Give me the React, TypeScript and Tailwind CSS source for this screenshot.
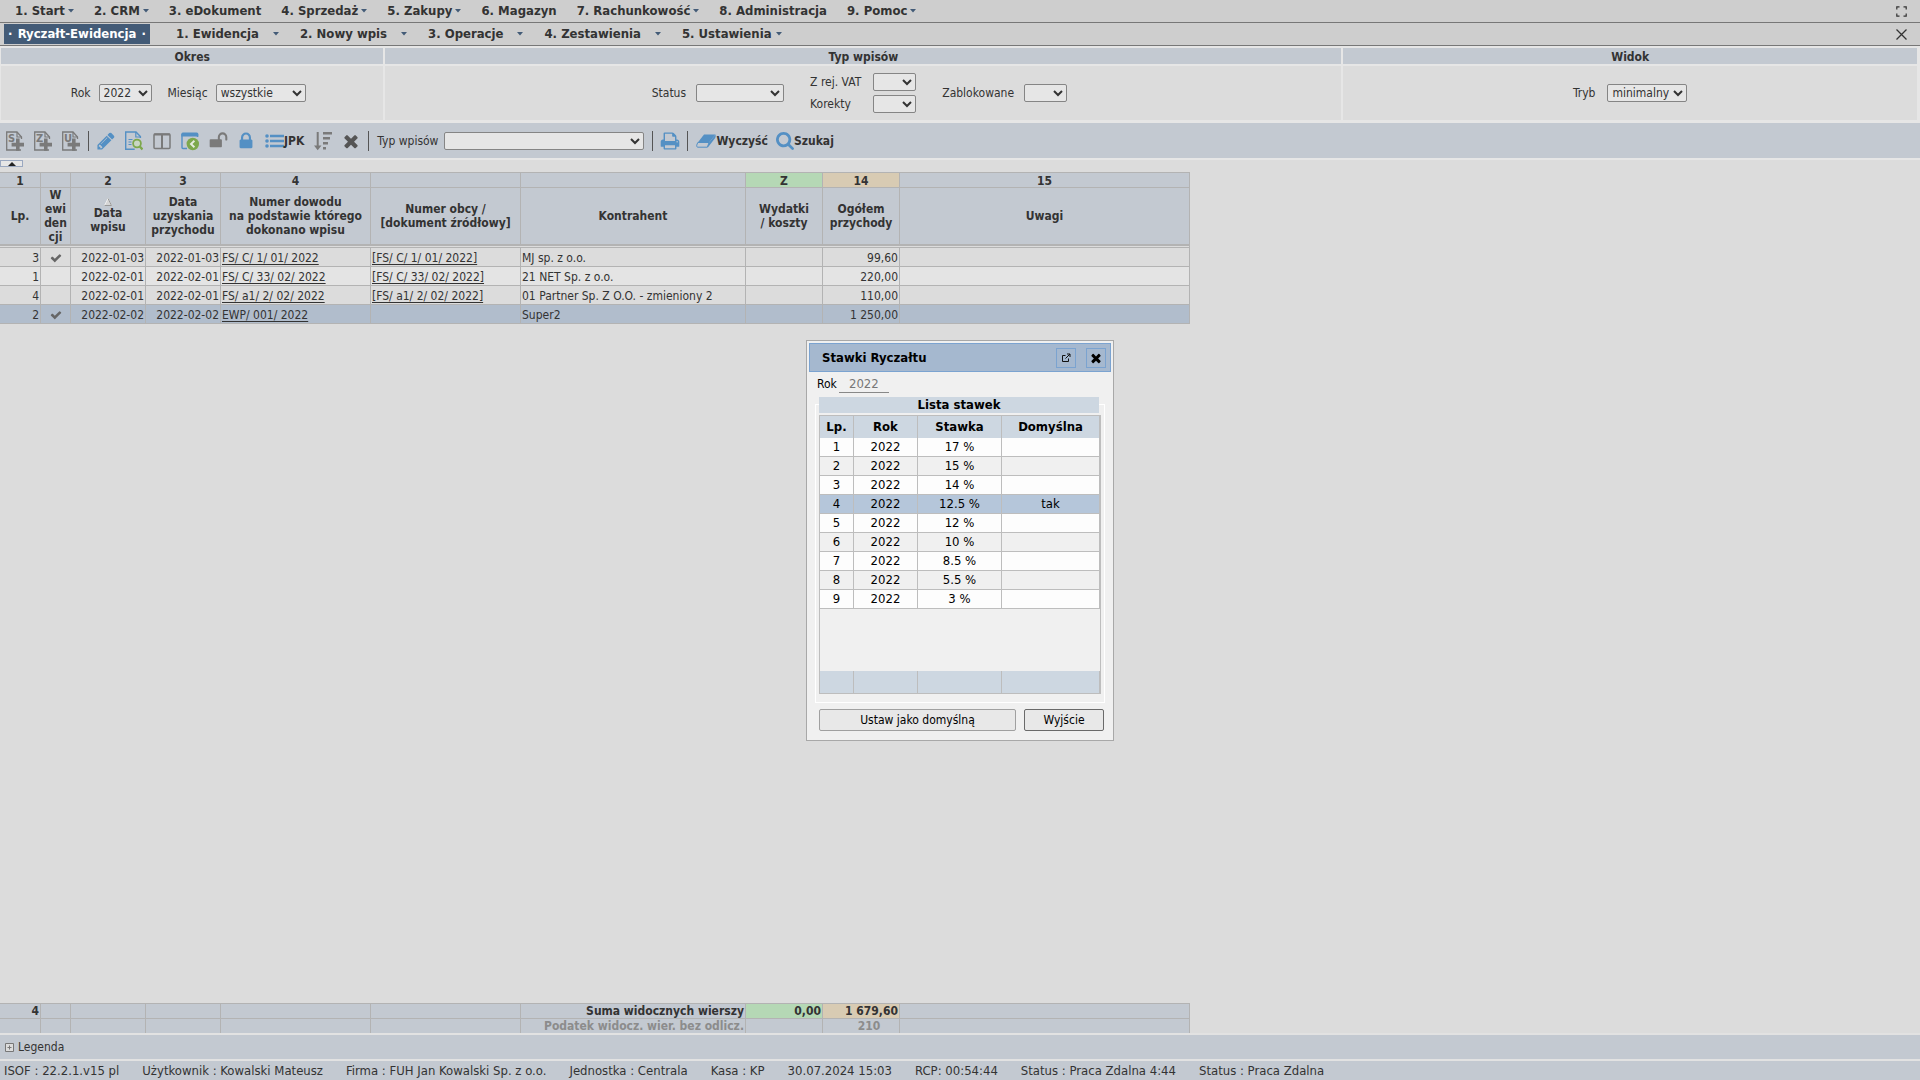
import type { ReactNode } from "react";
import clsx from "clsx";

type MenuEntry = { label: string; arrow?: boolean };

const mainMenu: MenuEntry[] = [
  { label: "1. Start", arrow: true },
  { label: "2. CRM", arrow: true },
  { label: "3. eDokument" },
  { label: "4. Sprzedaż", arrow: true },
  { label: "5. Zakupy", arrow: true },
  { label: "6. Magazyn" },
  { label: "7. Rachunkowość", arrow: true },
  { label: "8. Administracja" },
  { label: "9. Pomoc", arrow: true },
];

const moduleMenu = ["1. Ewidencja", "2. Nowy wpis", "3. Operacje", "4. Zestawienia", "5. Ustawienia"];

const entries = [
  { lp: 3, checked: true, date: "2022-01-03", income: "2022-01-03", doc: "FS/ C/ 1/ 01/ 2022", source: "[FS/ C/ 1/ 01/ 2022]", client: "MJ sp. z o.o.", total: "99,60" },
  { lp: 1, checked: false, date: "2022-02-01", income: "2022-02-01", doc: "FS/ C/ 33/ 02/ 2022", source: "[FS/ C/ 33/ 02/ 2022]", client: "21 NET Sp. z o.o.", total: "220,00" },
  { lp: 4, checked: false, date: "2022-02-01", income: "2022-02-01", doc: "FS/ a1/ 2/ 02/ 2022", source: "[FS/ a1/ 2/ 02/ 2022]", client: "01 Partner Sp. Z O.O. - zmieniony 2", total: "110,00" },
  { lp: 2, checked: true, date: "2022-02-02", income: "2022-02-02", doc: "EWP/ 001/ 2022", source: "", client: "Super2", total: "1 250,00", selected: true },
];

const rates = ["17 %", "15 %", "14 %", "12.5 %", "12 %", "10 %", "8.5 %", "5.5 %", "3 %"];

const PENCIL =
  "M491 1536l91-91-235-235-91 91v107h128v128h107zm523-928q0-22-22-22-10 0-17 7l-542 542q-7 7-7 17 0 22 22 22 10 0 17-7l542-542q7-7 7-17zm-54-192l416 416-832 832h-416v-416zm683 96q0 53-37 90l-166 166-416-416 166-165q36-38 90-38 53 0 91 38l235 234q37 39 37 91z";
const UNLOCK =
  "M1728 576v256q0 26-19 45t-45 19h-64q-26 0-45-19t-19-45v-256q0-106-75-181t-181-75-181 75-75 181v192h96q40 0 68 28t28 68v576q0 40-28 68t-68 28h-960q-40 0-68-28t-28-68v-576q0-40 28-68t68-28h672v-192q0-185 131.5-316.5t316.5-131.5 316.5 131.5 131.5 316.5z";
const LOCK =
  "M640 768h512v-192q0-106-75-181t-181-75-181 75-75 181v192zm832 96v576q0 40-28 68t-68 28h-960q-40 0-68-28t-28-68v-576q0-40 28-68t68-28h32v-192q0-184 132-316t316-132 316 132 132 316v192h32q40 0 68 28t28 68z";
const TIMES =
  "M1490 1322q0 40-28 68l-136 136q-28 28-68 28t-68-28l-294-294-294 294q-28 28-68 28t-68-28l-136-136q-28-28-28-68t28-68l294-294-294-294q-28-28-28-68t28-68l136-136q28-28 68-28t68 28l294 294 294-294q28-28 68-28t68 28l136 136q28 28 28 68t-28 68l-294 294 294 294q28 28 28 68z";
const PRINT =
  "M448 1536h896v-256h-896v256zm0-640h896v-384h-160q-40 0-68-28t-28-68v-160h-640v640zm1152 64q0-26-19-45t-45-19-45 19-19 45 19 45 45 19 45-19 19-45zm128 0v416q0 13-9.5 22.5t-22.5 9.5h-224v160q0 40-28 68t-68 28h-960q-40 0-68-28t-28-68v-160h-224q-13 0-22.5-9.5t-9.5-22.5v-416q0-79 56.5-135.5t135.5-56.5h64v-544q0-40 28-68t68-28h672q40 0 88 20t76 48l152 152q28 28 48 76t20 88v256h64q79 0 135.5 56.5t56.5 135.5z";
const SEARCH =
  "M1216 832q0-185-131.5-316.5t-316.5-131.5-316.5 131.5-131.5 316.5 131.5 316.5 316.5 131.5 316.5-131.5 131.5-316.5zm512 832q0 52-38 90t-90 38q-54 0-90-38l-343-342q-179 124-399 124-143 0-273.5-55.5t-225-150-150-225-55.5-273.5 55.5-273.5 150-225 225-150 273.5-55.5 273.5 55.5 225 150 150 225 55.5 273.5q0 220-124 399l343 343q37 37 37 90z";
const CHECK =
  "M1671 566q0 40-28 68l-724 724-136 136q-28 28-68 28t-68-28l-136-136-362-362q-28-28-28-68t28-68l136-136q28-28 68-28t68 28l294 295 656-657q28-28 68-28t68 28l136 136q28 28 28 68z";

function Glyph({ d, viewBox = "0 0 1792 1792", className }: { d: string; viewBox?: string; className?: string }) {
  return (
    <svg viewBox={viewBox} className={clsx("shrink-0 fill-current", className)} aria-hidden="true">
      <path d={d} />
    </svg>
  );
}

function AddDocIcon({ letter }: { letter: string }) {
  return (
    <svg viewBox="0 0 18 20" className="w-[18px] h-5" aria-hidden="true">
      <path d="M15.500 8V6L11 1H.7v18H15" fill="none" stroke="#7a7a7a" strokeWidth="1.300" />
      <path d="M11 1v5h4.500" fill="none" stroke="#7a7a7a" strokeWidth="1.200" />
      <path d="M10 7.500h3.600v4.300H18v3.600h-4.400v4.300H10v-4.300H5.600v-3.600H10z" fill="#7a7a7a" />
      <text x="2" y="10.500" fontSize="11" fontWeight="700" fill="#7a7a7a">
        {letter}
      </text>
    </svg>
  );
}

function PreviewIcon() {
  return (
    <svg viewBox="0 0 18 20" className="w-[18px] h-5" aria-hidden="true">
      <path d="M15.400 7V5.600L11 1H.7v17.300h9" fill="none" stroke="#5490c4" strokeWidth="1.400" />
      <path d="M10.800 1v5h4.600" fill="none" stroke="#5490c4" strokeWidth="1.200" />
      <path d="M3.500 8.500h4M3.500 11h3M3.500 13.500h3" stroke="#5490c4" strokeWidth="1.200" />
      <circle cx="12" cy="12.500" r="3.900" fill="#c9d6c4" stroke="#7da84c" strokeWidth="1.800" />
      <path d="M14.800 15.500l2.700 3" stroke="#7da84c" strokeWidth="2.400" />
    </svg>
  );
}

function ColumnsIcon() {
  return (
    <svg viewBox="0 0 18 18" className="size-[18px]" aria-hidden="true">
      <rect x="1" y="2" width="16" height="14.500" rx="1" fill="none" stroke="#7a7a7a" strokeWidth="1.500" />
      <path d="M1 2.500h16M9 2v14" stroke="#7a7a7a" strokeWidth="2" />
    </svg>
  );
}

function RestoreIcon() {
  return (
    <svg viewBox="0 0 18 20" className="w-[18px] h-5" aria-hidden="true">
      <path d="M1 3v13.500q0 1 1 1h4M16.500 6V3" fill="none" stroke="#5490c4" strokeWidth="1.400" />
      <path d="M.3 5.500V3q0-1.500 1.500-1.500h14q1.500 0 1.500 1.500v2.500z" fill="#5490c4" />
      <circle cx="11.800" cy="13" r="6.200" fill="#7da84c" />
      <path d="M13.400 9.800L10 13l3.400 3.200" fill="none" stroke="#e6ecdf" strokeWidth="1.900" />
    </svg>
  );
}

function ListIcon() {
  return (
    <svg viewBox="0 0 19 14" className="w-[19px] h-3.5 fill-[#5490c4]" aria-hidden="true">
      <circle cx="2" cy="2" r="1.800" />
      <circle cx="2" cy="7" r="1.800" />
      <circle cx="2" cy="12" r="1.800" />
      <path d="M5 .8h14v2.400H5zM5 5.800h14v2.400H5zM5 10.800h14v2.400H5z" />
    </svg>
  );
}

function SortIcon() {
  return (
    <svg viewBox="0 0 18 20" className="w-[18px] h-5 fill-[#7a7a7a]" aria-hidden="true">
      <path d="M2.700 1h2v13.500h2.800L3.700 19.300 0 14.500h2.700z" />
      <path d="M9 1h9v2.500H9zM9 6h7v2.500H9zM9 11h5v2.500H9zM9 16h3v2.500H9z" />
    </svg>
  );
}

function EraserIcon() {
  return (
    <svg viewBox="0 0 20 14" className="w-5 h-3.5" aria-hidden="true">
      <path d="M8 .5h11.500l-6.400 8H1.800z" fill="#5490c4" />
      <path d="M1.800 8.500L.7 11.200q-.2 2 1 2h9.600l1.800-4.700z" fill="#c3c9d1" stroke="#5490c4" strokeWidth="1" />
      <path d="M13.100 8.500L19.500.5q.5 2-.3 3.500L12 13.200h-.7z" fill="#5490c4" />
    </svg>
  );
}

function Arrow({ className }: { className?: string }) {
  return (
    <svg viewBox="0 0 6 4" className={clsx("w-1.5 h-1", className)} aria-hidden="true">
      <path d="M0 0h6L3 3.500z" fill="#435b77" />
    </svg>
  );
}

function SelectField({ label, options = [""], width, gap = "gap-2.5" }: { label: string; options?: string[]; width: string; gap?: string }) {
  return (
    <label className={clsx("flex items-center justify-between", gap)}>
      <span className="whitespace-nowrap">{label}</span>
      <select className={clsx("h-[18px] rounded-xs border border-[#858585] bg-[#e6e6e6] leading-4", width)}>
        {options.map((o) => (
          <option key={o}>{o}</option>
        ))}
      </select>
    </label>
  );
}

function FilterGroup({ title, children }: { title: string; children: ReactNode }) {
  return (
    <section className="flex flex-col gap-0.5">
      <h2 className="h-4 bg-[#c3c9d1] text-center font-bold leading-[18px]">{title}</h2>
      <div className="flex h-[54px] items-center justify-center bg-[#dcdcdc]">{children}</div>
    </section>
  );
}

function ToolButton({ label, className, children }: { label: string; className?: string; children: ReactNode }) {
  return (
    <button type="button" aria-label={label} className={clsx("flex h-5 w-[18px] shrink-0 items-center justify-center", className)}>
      {children}
    </button>
  );
}

function Separator() {
  return <span className="h-5 w-px shrink-0 bg-[#555]" />;
}

function EntryCols() {
  return (
    <colgroup>
      <col className="w-[41px]" />
      <col className="w-[30px]" />
      <col className="w-[75px]" />
      <col className="w-[75px]" />
      <col className="w-[150px]" />
      <col className="w-[150px]" />
      <col className="w-[225px]" />
      <col className="w-[77px]" />
      <col className="w-[77px]" />
      <col className="w-[290px]" />
    </colgroup>
  );
}

function EntriesTable() {
  return (
    <table className="w-[1190px] table-fixed border-separate border-spacing-0 [&_td]:border-r [&_td]:border-b [&_td]:border-[#b3b3b3] [&_th]:border-r [&_th]:border-b [&_th]:border-[#b3b3b3]">
      <EntryCols />
      <thead className="bg-[#c3c9d1] text-center leading-[14px]">
        <tr className="h-4 leading-3 [&>th]:border-t [&>th]:p-0 [&>th]:pt-0.5">
          <th>1</th>
          <th></th>
          <th>2</th>
          <th>3</th>
          <th>4</th>
          <th></th>
          <th></th>
          <th className="bg-[#b5d8b5]">Z</th>
          <th className="bg-[#d8cbb3]">14</th>
          <th>15</th>
        </tr>
        <tr className="h-[58px] [&>th]:border-b-2 [&>th]:p-0">
          <th>Lp.</th>
          <th>
            W<br />ewi<br />den<br />cji
          </th>
          <th>
            <svg viewBox="0 0 8 8" className="mx-auto size-2" aria-hidden="true">
              <path d="M4 .5L.5 7.500h7z" fill="#d6d6d6" stroke="#eee" />
              <path d="M4 .5l3.500 7h-7" fill="none" stroke="#999" />
            </svg>
            Data
            <br />
            wpisu
          </th>
          <th>
            Data
            <br />
            uzyskania
            <br />
            przychodu
          </th>
          <th>
            Numer dowodu
            <br />
            na podstawie którego
            <br />
            dokonano wpisu
          </th>
          <th>
            Numer obcy /<br />
            [dokument źródłowy]
          </th>
          <th>Kontrahent</th>
          <th>
            Wydatki
            <br />/ koszty
          </th>
          <th>
            Ogółem
            <br />
            przychody
          </th>
          <th>Uwagi</th>
        </tr>
      </thead>
      <tbody className="leading-4">
        <tr aria-hidden="true" className="h-0.5">
          <td colSpan={10} className="border-r-0 p-0"></td>
        </tr>
        {entries.map((e) => (
          <tr
            key={e.lp}
            className={clsx("h-[19px] whitespace-nowrap [&>td]:px-px [&>td]:pt-0.5 [&>td]:pb-0", e.selected ? "bg-[#b1bdcc]" : "odd:bg-[#e4e4e4]")}
          >
            <td className="text-right">{e.lp}</td>
            <td>{e.checked && <Glyph d={CHECK} className="mx-auto size-3 text-[#666]" />}</td>
            <td className="text-right">{e.date}</td>
            <td className="text-right">{e.income}</td>
            <td>
              <a href="#" className="underline underline-offset-2">{e.doc}</a>
            </td>
            <td>
              <a href="#" className="underline underline-offset-2">{e.source}</a>
            </td>
            <td>{e.client}</td>
            <td></td>
            <td className="text-right">{e.total}</td>
            <td></td>
          </tr>
        ))}
      </tbody>
    </table>
  );
}

function SummaryTable() {
  return (
    <table className="w-[1190px] table-fixed border-separate border-spacing-0 bg-[#c3c9d1] font-bold leading-[14px] [&_td]:border-t [&_td]:border-r [&_td]:border-[#b3b3b3] [&_td]:px-px [&_td]:py-0">
      <EntryCols />
      <tbody>
        <tr className="h-[15px] text-right">
          <td>4</td>
          <td></td>
          <td></td>
          <td></td>
          <td></td>
          <td></td>
          <td>Suma widocznych wierszy</td>
          <td className="bg-[#b5d8b5]">0,00</td>
          <td className="bg-[#d8cbb3]">1 679,60</td>
          <td></td>
        </tr>
        <tr className="h-[15px] text-[#8c8c8c]">
          <td></td>
          <td></td>
          <td></td>
          <td></td>
          <td></td>
          <td></td>
          <td className="text-right">Podatek widocz. wier. bez odlicz.</td>
          <td></td>
          <td className="text-center">
            <span className="pl-4">210</span>
          </td>
          <td></td>
        </tr>
      </tbody>
    </table>
  );
}

function RatesDialog() {
  return (
    <div
      role="dialog"
      aria-labelledby="rates-title"
      className="absolute inset-x-0 top-[340px] mx-auto w-[308px] border border-[#a8a8a8] bg-[#f0f0f0] p-0.5 text-black"
    >
      <header className="flex h-[29px] items-center border border-[#7ba3d0] bg-[#a5b8cf] pr-1 pl-3">
        <h2 id="rates-title" className="flex-1 text-[13px] font-bold">Stawki Ryczałtu</h2>
        <button type="button" aria-label="Otwórz w nowym oknie" className="mr-2.5 flex size-5 items-center justify-center border border-[#7ba3d0]">
          <svg viewBox="0 0 10 10" className="size-2.5" fill="none" stroke="#111" aria-hidden="true">
            <path d="M4.500 2.500h-3v6h6v-3M6 1h3v3M9 1L4.500 5.500" />
          </svg>
        </button>
        <button type="button" aria-label="Zamknij" className="flex size-5 items-center justify-center border border-[#7ba3d0]">
          <Glyph d={TIMES} className="size-3.5" />
        </button>
      </header>

      <div className="px-1.5 pb-[7px]">
        <label className="flex h-6 items-center gap-0.5 pl-0.5">
          Rok
          <input readOnly value="2022" className="h-[17px] w-[50px] border-b border-[#888] text-center text-[13px] text-[#777]" />
        </label>

        <div className="mt-2 border border-white px-[3px] pb-2">
          <h3 className="relative -mt-2 h-4 w-[280px] max-w-full bg-[#cdd7e1] text-center text-[13px] font-bold leading-4">Lista stawek</h3>
          <div className="mt-0.5 flex h-[279px] flex-col justify-between border border-[#bdbdbd]">
            <table className="w-full table-fixed border-separate border-spacing-0 text-center text-[13px] [&_td]:border-r [&_td]:border-[#bdbdbd] [&_th]:border-r [&_th]:border-[#bdbdbd]">
              <colgroup>
                <col className="w-[34px]" />
                <col className="w-16" />
                <col className="w-[84px]" />
                <col />
              </colgroup>
              <thead className="bg-[#cdd7e1]">
                <tr className="h-[22px] [&>th]:p-0">
                  <th>Lp.</th>
                  <th>Rok</th>
                  <th>Stawka</th>
                  <th>Domyślna</th>
                </tr>
              </thead>
              <tbody>
                {rates.map((rate, i) => (
                  <tr
                    key={rate}
                    className={clsx(
                      "h-[19px] leading-[18px] [&>td]:border-b [&>td]:p-0",
                      rate === "12.5 %" ? "bg-[#b5c6da]" : "odd:bg-[#fdfdfd]",
                    )}
                  >
                    <td>{i + 1}</td>
                    <td>2022</td>
                    <td>{rate}</td>
                    <td>{rate === "12.5 %" ? "tak" : ""}</td>
                  </tr>
                ))}
              </tbody>
            </table>
            <div className="grid h-[22px] grid-cols-[34px_64px_84px_1fr] bg-[#cdd7e1] *:border-r *:border-[#bdbdbd]">
              <span />
              <span />
              <span />
              <span />
            </div>
          </div>
        </div>

        <div className="mt-1.5 flex gap-2 pr-px pl-1">
          <button type="button" className="h-[22px] flex-1 rounded-xs border border-[#a0a0a0] bg-[#e8e8e8]">Ustaw jako domyślną</button>
          <button type="button" className="h-[22px] w-20 rounded-xs border border-[#6a6a6a] bg-[#e8e8e8]">Wyjście</button>
        </div>
      </div>
    </div>
  );
}

export default function App() {
  return (
    <div className="relative flex min-h-screen flex-col bg-[#dcdcdc] font-['DejaVu_Sans_Condensed','DejaVu_Sans',sans-serif] text-[12px] leading-4 text-[#333]">
      <nav className="flex h-[23px] items-center border-b border-[#777] bg-[#cecece] pr-[13px] pl-[15px] text-[13px] font-bold">
        <ul className="flex flex-1 gap-5">
          {mainMenu.map((m) => (
            <li key={m.label}>
              <a href="#" className="flex items-center gap-[3px] whitespace-nowrap">
                {m.label}
                {m.arrow && <Arrow />}
              </a>
            </li>
          ))}
        </ul>
        <button type="button" aria-label="Pełny ekran">
          <svg viewBox="0 0 11 11" className="size-[11px]" fill="none" stroke="#333" strokeWidth="1.200" aria-hidden="true">
            <path d="M.8 3.500V.8h2.700M7.500.8h2.700v2.700M10.200 7.500v2.700H7.500M3.500 10.200H.8V7.500" />
          </svg>
        </button>
      </nav>

      <nav className="flex h-[23px] items-center border-b border-[#777] bg-[#cecece] pr-[13px] pl-1 text-[13px] font-bold">
        <a href="#" className="mr-[26px] flex h-5 w-[146px] items-center justify-between bg-[#435b77] px-1 text-white">
          <span>·</span>
          Ryczałt-Ewidencja
          <span>·</span>
        </a>
        <ul className="flex flex-1 gap-[21px]">
          {moduleMenu.map((label, i) => (
            <li key={label}>
              <a href="#" className={clsx("flex items-center whitespace-nowrap", i < 4 ? "gap-3.5" : "gap-1")}>
                {label}
                <Arrow />
              </a>
            </li>
          ))}
        </ul>
        <button type="button" aria-label="Zamknij moduł">
          <svg viewBox="0 0 11 11" className="size-[11px]" stroke="#333" strokeWidth="1.300" aria-hidden="true">
            <path d="M.5.5l10 10M10.500.5l-10 10" />
          </svg>
        </button>
      </nav>

      <div className="grid grid-cols-[2fr_5fr_3fr] gap-x-0.5 bg-[#e6e6e6] pt-0.5 pr-[3px] pb-[3px] pl-px">
        <FilterGroup title="Okres">
          <div className="flex gap-4 pr-2">
            <SelectField label="Rok" options={["2022", "2021"]} width="w-[53px]" gap="gap-2" />
            <SelectField label="Miesiąc" options={["wszystkie", "styczeń", "luty"]} width="w-[90px]" gap="gap-2" />
          </div>
        </FilterGroup>
        <FilterGroup title="Typ wpisów">
          <div className="flex items-center gap-[26px] pr-2">
            <SelectField label="Status" width="w-[88px]" />
            <div className="flex flex-col gap-1">
              <SelectField label="Z rej. VAT" width="w-[43px]" gap="gap-3" />
              <SelectField label="Korekty" width="w-[43px]" gap="gap-3" />
            </div>
            <SelectField label="Zablokowane" width="w-[43px]" />
          </div>
        </FilterGroup>
        <FilterGroup title="Widok">
          <SelectField label="Tryb" options={["minimalny", "pełny"]} width="w-20" gap="gap-3" />
        </FilterGroup>
      </div>

      <div className="flex h-[37px] items-center gap-2 border-b-2 border-[#e6e6e6] bg-[#c3c9d1] pl-1.5 text-[#7a7a7a]">
        <div className="flex gap-2.5">
          <ToolButton label="Dodaj sprzedaż"><AddDocIcon letter="S" /></ToolButton>
          <ToolButton label="Dodaj zakup"><AddDocIcon letter="Z" /></ToolButton>
          <ToolButton label="Dodaj usługę"><AddDocIcon letter="U" /></ToolButton>
        </div>
        <Separator />
        <div className="flex items-center gap-2.5">
          <ToolButton label="Edytuj"><Glyph d={PENCIL} className="size-5 text-[#5490c4]" /></ToolButton>
          <ToolButton label="Podgląd"><PreviewIcon /></ToolButton>
          <ToolButton label="Kolumny"><ColumnsIcon /></ToolButton>
          <ToolButton label="Przywróć"><RestoreIcon /></ToolButton>
          <ToolButton label="Odblokuj"><Glyph d={UNLOCK} className="size-[19px]" /></ToolButton>
          <ToolButton label="Zablokuj"><Glyph d={LOCK} className="size-5 text-[#5490c4]" /></ToolButton>
          <button type="button" className="flex items-center font-bold text-[#333]">
            <ListIcon />
            JPK
          </button>
          <ToolButton label="Sortuj"><SortIcon /></ToolButton>
          <ToolButton label="Usuń"><Glyph d={TIMES} className="size-5 text-[#555]" /></ToolButton>
        </div>
        <div className="flex items-center gap-2 text-[#333]">
          <Separator />
          <SelectField label="Typ wpisów" width="w-[200px]" gap="gap-1.5" />
          <Separator />
          <ToolButton label="Drukuj"><Glyph d={PRINT} className="size-5 text-[#5490c4]" /></ToolButton>
          <Separator />
          <button type="button" className="flex items-center font-bold">
            <EraserIcon />
            Wyczyść
          </button>
          <button type="button" className="flex items-center font-bold">
            <Glyph d={SEARCH} viewBox="64 128 1664 1664" className="size-[18px] text-[#5490c4]" />
            Szukaj
          </button>
        </div>
      </div>

      <main className="flex-1">
        <button type="button" aria-label="Zwiń filtry" className="mb-[5px] flex h-[7px] w-[23px] items-center justify-center border border-[#9aa8c0] bg-[#e6e6e6]">
          <svg viewBox="0 0 8 4" className="h-1 w-2" aria-hidden="true">
            <path d="M0 4l4-4 4 4z" fill="#222" />
          </svg>
        </button>
        <EntriesTable />
      </main>

      <SummaryTable />
      <div className="flex h-7 items-center gap-1 border-y-2 border-[#e2e2e2] bg-[#c3c9d1] pl-[5px]">
        <button type="button" className="flex items-center gap-1">
          <svg viewBox="0 0 9 9" className="size-[9px]" fill="#dcdcdc" stroke="#777" aria-hidden="true">
            <path d="M.5.5h8v8h-8zM2.500 4.500h4M4.500 2.500v4" />
          </svg>
          Legenda
        </button>
      </div>
      <footer className="flex h-[19px] items-center gap-[23px] whitespace-nowrap bg-[#c3c9d1] pl-1 text-[13px]">
        <span>ISOF : 22.2.1.v15 pl</span>
        <span>Użytkownik : Kowalski Mateusz</span>
        <span>Firma : FUH Jan Kowalski Sp. z o.o.</span>
        <span>Jednostka : Centrala</span>
        <span>Kasa : KP</span>
        <span>30.07.2024 15:03</span>
        <span>RCP: 00:54:44</span>
        <span>Status : Praca Zdalna 4:44</span>
        <span>Status : Praca Zdalna</span>
      </footer>

      <RatesDialog />
    </div>
  );
}
